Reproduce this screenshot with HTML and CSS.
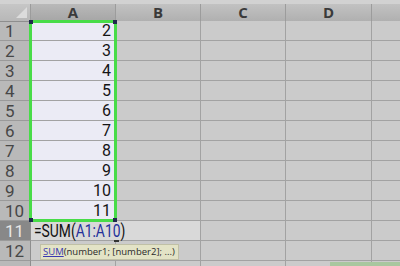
FILE: index.html
```html
<!DOCTYPE html>
<html>
<head>
<meta charset="utf-8">
<link rel="stylesheet" href="styles.css">
</head>
<body>
<div class="sheet">
  <div class="topstrip"></div>
  <div class="grid">
    <div class="ch corner"><span class="tri"></span></div>
    <div class="ch sel">A</div>
    <div class="ch">B</div>
    <div class="ch">C</div>
    <div class="ch">D</div>
    <div class="ch last"></div>

    <div class="rh">1</div><div class="c a">2</div><div class="c"></div><div class="c"></div><div class="c"></div><div class="c last"></div>
    <div class="rh">2</div><div class="c a">3</div><div class="c"></div><div class="c"></div><div class="c"></div><div class="c last"></div>
    <div class="rh">3</div><div class="c a">4</div><div class="c"></div><div class="c"></div><div class="c"></div><div class="c last"></div>
    <div class="rh">4</div><div class="c a">5</div><div class="c"></div><div class="c"></div><div class="c"></div><div class="c last"></div>
    <div class="rh">5</div><div class="c a">6</div><div class="c"></div><div class="c"></div><div class="c"></div><div class="c last"></div>
    <div class="rh">6</div><div class="c a">7</div><div class="c"></div><div class="c"></div><div class="c"></div><div class="c last"></div>
    <div class="rh">7</div><div class="c a">8</div><div class="c"></div><div class="c"></div><div class="c"></div><div class="c last"></div>
    <div class="rh">8</div><div class="c a">9</div><div class="c"></div><div class="c"></div><div class="c"></div><div class="c last"></div>
    <div class="rh">9</div><div class="c a">10</div><div class="c"></div><div class="c"></div><div class="c"></div><div class="c last"></div>
    <div class="rh">10</div><div class="c a">11</div><div class="c"></div><div class="c"></div><div class="c"></div><div class="c last"></div>
    <div class="rh active">11</div><div class="c edit"><span class="ftext">=SUM(<span class="ref">A1:A10</span>)</span><span class="caret"></span></div><div class="c"></div><div class="c"></div><div class="c last"></div>
    <div class="rh">12</div><div class="c"></div><div class="c"></div><div class="c"></div><div class="c"></div><div class="c last"></div>
    <div class="rh"></div><div class="c"></div><div class="c"></div><div class="c"></div><div class="c"></div><div class="c last"></div>
  </div>
  <div class="selection"><span class="h tl"></span><span class="h tr"></span><span class="h bl"></span><span class="h br"></span></div>
  <div class="tip"><span class="fn">SUM</span>(number1; [number2]; ...)</div>
  <div class="greenbar"></div>
</div>
</body>
</html>
```
FILE: styles.css
```css
html, body {
  margin: 0;
  padding: 0;
  background: #cbcbcb;
  overflow: hidden;
}
.sheet {
  position: relative;
  width: 400px;
  height: 266px;
  overflow: hidden;
  font-family: "Roboto", "Liberation Sans", sans-serif;
}
.topstrip {
  height: 4px;
  background: #d2d2d2;
}
.grid {
  display: grid;
  grid-template-columns: 31px 85px 85px 85px 86px 1fr;
  grid-template-rows: 17px repeat(12, 20px) 20px;
}
.ch {
  background: linear-gradient(#c2c2c2, #b0b0b0);
  border-right: 1px solid #9c9c9c;
  border-bottom: 1px solid #8e8e8e;
  color: #3a3a3a;
  font-family: "Open Sans", "Liberation Sans", sans-serif;
  font-weight: 700;
  font-size: 15px;
  line-height: 17px;
  text-align: center;
  box-sizing: border-box;
  height: 18px;
  margin-bottom: -1px;
}
.ch.sel {
  background: linear-gradient(#b9b9b9, #a6a6a6);
}
.ch.corner {
  position: relative;
  background: linear-gradient(#c6c6c6, #b8b8b8);
}
.tri {
  position: absolute;
  right: 3px;
  bottom: 3px;
  width: 0;
  height: 0;
  border-left: 11px solid transparent;
  border-bottom: 11px solid #dcdcdc;
}
.ch.last, .c.last { border-right: 0; }
.rh {
  background: #b9b9b9;
  border-right: 1px solid #8e8e8e;
  border-bottom: 1px solid #9a9a9a;
  color: #474747;
  font-size: 17px;
  line-height: 20px;
  padding-left: 5px;
  box-sizing: border-box;
  overflow: hidden;
}
.rh.active {
  background: #888888;
  color: #e6e6e6;
}
.c {
  background: #cbcbcb;
  border-right: 1px solid #a2a2a2;
  border-bottom: 1px solid #a2a2a2;
  box-sizing: border-box;
}
.c.a {
  background: #ebebf5;
  text-align: right;
  padding-right: 4px;
  font-size: 16px;
  line-height: 19px;
  color: #151515;
  overflow: hidden;
}
.c.edit {
  grid-column: span 2;
  position: relative;
  background: #d9d9d9;
  padding-left: 3px;
  white-space: nowrap;
  overflow: visible;
}
.ftext {
  display: inline-block;
  font-size: 18px;
  line-height: 19px;
  color: #111;
  transform: scaleX(0.77);
  transform-origin: left center;
}
.ref { color: #24309a; }
.caret {
  position: absolute;
  left: 83px;
  top: 19px;
  width: 5px;
  height: 2px;
  background: #333;
}
.selection {
  position: absolute;
  left: 29px;
  top: 20px;
  width: 88px;
  height: 202px;
  box-sizing: border-box;
  border: 3px solid #48dc48;
}
.h {
  position: absolute;
  width: 4px;
  height: 4px;
  background: #1e2a4a;
}
.tl { left: -3px; top: -3px; }
.tr { right: -3px; top: -3px; }
.bl { left: -3px; bottom: -3px; }
.br { right: -3px; bottom: -3px; }
.tip {
  position: absolute;
  left: 40px;
  top: 244px;
  height: 14px;
  padding: 0 3px 0 2px;
  background: #e3e3c6;
  border: 1px solid #c0c0a6;
  font-family: "Open Sans", "Liberation Sans", sans-serif;
  font-size: 9.5px;
  line-height: 14px;
  color: #2a2a2a;
  white-space: nowrap;
}
.fn {
  color: #3a3ab0;
  text-decoration: underline;
}
.greenbar {
  position: absolute;
  left: 330px;
  top: 262px;
  width: 70px;
  height: 4px;
  background: #a9c79f;
}
```
